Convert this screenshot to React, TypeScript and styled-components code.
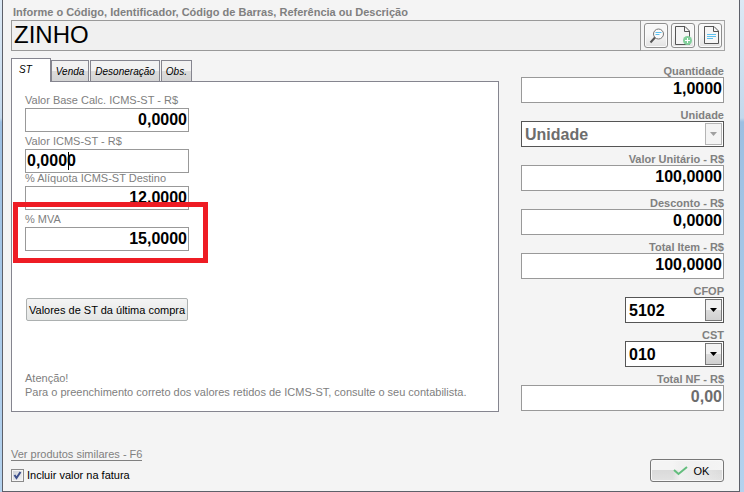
import React, { useId, useState } from "react";
import styled, { createGlobalStyle, css } from "styled-components";

const GlobalStyle = createGlobalStyle`
  *, *::before, *::after { box-sizing: border-box; }
  body {
    margin: 0;
    font-family: "Liberation Sans", Arial, sans-serif;
    font-size: 11px;
    color: #808080;
  }
  input, select, button { font-family: inherit; margin: 0; }
`;

const Frame = styled.div`
  min-height: 100vh;
  padding: 0 4px 0 2px;
  background: linear-gradient(#dce9f5 0, #c3d8ec 118px, #9cbfe2 122px, #b4d2ee 100%);
`;

const Window = styled.main`
  min-height: 100vh;
  display: flex;
  flex-direction: column;
  padding: 5px 14px 9px 8px;
  background: #f4f4f4;
  border: solid #5d6069;
  border-width: 0 1px 1px;
`;

const SearchLabel = styled.label`
  padding-left: 2px;
  font-weight: bold;
  line-height: 15px;
`;

const SearchRow = styled.div`
  display: flex;
  height: 31px;
`;

const SearchInput = styled.input`
  flex: 1;
  min-width: 0;
  padding: 0 2px 2px;
  border: 1px solid #999;
  border-radius: 0;
  background: #f0f0f0;
  color: #000;
  font-size: 24px;
  outline: none;
`;

const Tools = styled.div`
  display: flex;
  gap: 3px;
  padding: 2px 2px 2px 3px;
  border: solid #a5a5a5;
  border-width: 1px 1px 1px 0;
`;

const ToolButton = styled.button`
  display: flex;
  align-items: center;
  justify-content: center;
  width: 24px;
  height: 25px;
  padding: 0;
  border: 1px solid #8e8e8e;
  border-radius: 3px;
  background: linear-gradient(#f7f7f7 45%, #e2e2e2);
  box-shadow: inset 0 0 0 1px #fbfbfb;
`;

const Columns = styled.div`
  display: flex;
  align-items: flex-start;
  gap: 22px;
  padding: 7px 1px 0 0;
`;

const TabArea = styled.section`
  flex: 1;
  min-width: 0;
`;

const TabList = styled.div`
  display: flex;
  align-items: flex-end;
`;

const Tab = styled.button<{ $active?: boolean }>`
  height: 21px;
  margin-right: 1px;
  padding: 0 4px;
  border: 1px solid #85858f;
  border-bottom: 0;
  background: linear-gradient(#f2f2f2 50%, #dcdcdc 50%, #d4d4d4);
  color: #000;
  font-size: 10px;
  font-style: italic;
  white-space: nowrap;
  ${(p) =>
    p.$active &&
    css`
      height: 24px;
      margin: 0 0 -1px;
      padding: 0 18px 2px 7px;
      background: #fff;
      position: relative;
    `}
`;

const Panel = styled.div`
  display: flex;
  flex-direction: column;
  align-items: flex-start;
  padding: 13px 13px 12px;
  border: 1px solid #85858f;
  background: #fff;
`;

const TaxFields = styled.div`
  width: 164px;
`;

const Field = styled.div<{ $gap: number }>`
  position: relative;
  display: flex;
  flex-direction: column;
  padding-bottom: ${(p) => p.$gap}px;
`;

const FieldLabel = styled.label<{ $strong?: boolean }>`
  line-height: ${(p) => (p.$strong ? 12 : 13)}px;
  padding-bottom: ${(p) => (p.$strong ? 0 : 1)}px;
  margin-top: ${(p) => (p.$strong ? 0 : -1)}px;
  white-space: nowrap;
  ${(p) => p.$strong && "font-weight: bold; text-align: right;"}
`;

const NumberInput = styled.input<{ $left?: boolean; $tall?: boolean }>`
  width: 100%;
  height: ${(p) => (p.$tall ? 26 : 24)}px;
  padding: 0 1px ${(p) => (p.$tall ? 3 : 1)}px;
  border: 1px solid #999;
  border-radius: 0;
  background: #fff;
  color: #000;
  font-size: 16px;
  font-weight: bold;
  text-align: ${(p) => (p.$left ? "left" : "right")};
  outline: none;
  &:disabled { color: #6d6d6d; }
`;

const Caret = styled.span`
  position: absolute;
  left: 43px;
  bottom: 3px;
  width: 1px;
  height: 18px;
  background: #000;
`;

const Highlight = styled.span`
  position: absolute;
  inset: -12px -19px -12px -12px;
  border: 5px solid #ee1c24;
  pointer-events: none;
`;

const LastValuesButton = styled.button`
  height: 23px;
  margin: 47px 0 0 1px;
  padding: 0 2px;
  border: 1px solid #acb0b0;
  border-radius: 2px;
  background: linear-gradient(#f4f4f4, #e4e6e5);
  color: #000;
  font-size: 11px;
  white-space: nowrap;
`;

const Notice = styled.p`
  margin: 50px 0 0;
  line-height: 14px;
`;

const Totals = styled.section`
  width: 203px;
  padding-top: 7px;
`;

const SelectBox = styled.span<{ $short?: boolean }>`
  position: relative;
  align-self: flex-end;
  display: flex;
  width: ${(p) => (p.$short ? "99px" : "100%")};
`;

const Select = styled.select`
  appearance: none;
  width: 100%;
  height: 26px;
  padding: 0 22px 0 3px;
  border: 1px solid #555;
  border-radius: 0;
  background: #fff;
  color: #000;
  font-size: 16px;
  font-weight: bold;
  outline: none;
  &:disabled { color: #6d6d6d; opacity: 1; }
`;

const Arrow = styled.span<{ $muted?: boolean }>`
  position: absolute;
  top: 2px;
  right: 2px;
  bottom: 2px;
  width: 17px;
  display: flex;
  align-items: center;
  justify-content: center;
  border: 1px solid ${(p) => (p.$muted ? "#b5b5b5" : "#777")};
  background: ${(p) => (p.$muted ? "#f4f4f4" : "linear-gradient(#f2f2f2 50%, #dcdcdc 50%, #d0d0d0)")};
  color: ${(p) => (p.$muted ? "#a0a0a0" : "#000")};
  pointer-events: none;
`;

const Footer = styled.footer`
  display: flex;
  align-items: flex-end;
  justify-content: space-between;
  margin-top: auto;
  padding-top: 20px;
`;

const FooterLeft = styled.div`
  display: flex;
  flex-direction: column;
  align-items: flex-start;
  gap: 7px;
`;

const SimilarLink = styled.a`
  border-bottom: 1px solid #808080;
  color: #808080;
  font-size: 11px;
  line-height: 12px;
  text-decoration: none;
`;

const CheckLabel = styled.label`
  display: flex;
  align-items: center;
  gap: 3px;
  color: #000;
  line-height: 14px;
`;

const CheckBox = styled.span`
  position: relative;
  display: flex;
  width: 13px;
  height: 13px;
  svg { position: absolute; inset: 0; pointer-events: none; }
  input:not(:checked) + svg { display: none; }
`;

const CheckInput = styled.input`
  appearance: none;
  width: 13px;
  height: 13px;
  border: 1px solid #8a8a8a;
  background: linear-gradient(135deg, #ccd0d6, #f4f4f4);
  box-shadow: inset 0 0 0 1px #f6f6f6;
`;

const OkButton = styled.button`
  display: flex;
  align-items: center;
  justify-content: center;
  gap: 6px;
  width: 74px;
  height: 23px;
  margin-right: 1px;
  padding: 0 0 0 8px;
  border: 1px solid #777;
  border-radius: 3px;
  background:
    linear-gradient(90deg, transparent 30%, #f0f0f0 40%, transparent 100%),
    linear-gradient(#f4f4f4 50%, #dadada 50%, #e2e2e2);
  box-shadow: inset 0 0 0 1px #f8f8f8;
  color: #000;
  font-size: 11px;
`;

function SearchIcon() {
  return (
    <svg width="20" height="21" viewBox="0 0 20 21" fill="none" aria-hidden="true">
      <circle cx="12.5" cy="9" r="5" fill="#fafafa" stroke="#777" />
      <path d="M9 12.5 4.5 17.500" stroke="#555" strokeWidth="2" />
      <path d="M9.500 7.500h6M9.500 9.500h4" stroke="#5cc0ee" />
    </svg>
  );
}

function AddPageIcon() {
  return (
    <svg width="20" height="21" viewBox="0 0 20 21" fill="none" aria-hidden="true">
      <path d="M2.500 1.500h9.500l4.500 4.500v13.500h-14z" fill="#f5f5f5" stroke="#555" />
      <path d="M11.500 1.500v5h5" stroke="#555" />
      <circle cx="14.500" cy="15.500" r="4.500" fill="#83cf9b" />
      <path d="M14.500 13v5M12 15.500h5" stroke="#fff" />
    </svg>
  );
}

function PageIcon() {
  return (
    <svg width="20" height="21" viewBox="0 0 20 21" fill="none" aria-hidden="true">
      <path d="M4.500 1.500h9.500l4.500 4.500v12.500h-14z" fill="#f5f5f5" stroke="#555" />
      <path d="M13.500 1.500v5h5" stroke="#555" />
      <path d="M7 9.500h9M7 11.500h9M7 13.500h6" stroke="#5cc0ee" />
    </svg>
  );
}

type NumberFieldProps = {
  label: string;
  initial: string;
  gap: number;
  strong?: boolean;
  left?: boolean;
  disabled?: boolean;
  children?: React.ReactNode;
};

function NumberField({ label, initial, gap, strong, left, disabled, children }: NumberFieldProps) {
  const id = useId();
  const [value, setValue] = useState(initial);
  return (
    <Field $gap={gap}>
      <FieldLabel htmlFor={id} $strong={strong}>{label}</FieldLabel>
      <NumberInput
        id={id}
        $left={left}
        $tall={strong}
        disabled={disabled}
        value={value}
        onChange={(e) => setValue(e.target.value)}
      />
      {children}
    </Field>
  );
}

function SelectField({ label, value, short, disabled }: { label: string; value: string; short?: boolean; disabled?: boolean }) {
  const id = useId();
  return (
    <Field $gap={6}>
      <FieldLabel htmlFor={id} $strong>{label}</FieldLabel>
      <SelectBox $short={short}>
        <Select id={id} defaultValue={value} disabled={disabled}>
          <option>{value}</option>
        </Select>
        <Arrow $muted={disabled}>
          <svg width="7" height="4" viewBox="0 0 7 4" aria-hidden="true">
            <path d="M0 0h7L3.500 4z" fill="currentColor" />
          </svg>
        </Arrow>
      </SelectBox>
    </Field>
  );
}

export default function App() {
  return (
    <>
      <GlobalStyle />
      <Frame>
        <Window>
          <SearchLabel htmlFor="search">
            Informe o Código, Identificador, Código de Barras, Referência ou Descrição
          </SearchLabel>
          <SearchRow>
            <SearchInput id="search" defaultValue="ZINHO" />
            <Tools>
              <ToolButton aria-label="Pesquisar"><SearchIcon /></ToolButton>
              <ToolButton aria-label="Novo"><AddPageIcon /></ToolButton>
              <ToolButton aria-label="Detalhes"><PageIcon /></ToolButton>
            </Tools>
          </SearchRow>

          <Columns>
            <TabArea>
              <TabList role="tablist">
                <Tab role="tab" aria-selected $active>ST</Tab>
                <Tab role="tab">Venda</Tab>
                <Tab role="tab">Desoneração</Tab>
                <Tab role="tab">Obs.</Tab>
              </TabList>
              <Panel role="tabpanel">
                <TaxFields>
                  <NumberField label="Valor Base Calc. ICMS-ST - R$" initial="0,0000" gap={4} />
                  <NumberField label="Valor ICMS-ST - R$" initial="0,0000" gap={0} left>
                    <Caret />
                  </NumberField>
                  <NumberField label="% Alíquota ICMS-ST Destino" initial="12,0000" gap={4} />
                  <NumberField label="% MVA" initial="15,0000" gap={0}>
                    <Highlight />
                  </NumberField>
                </TaxFields>
                <LastValuesButton>Valores de ST da última compra</LastValuesButton>
                <Notice>
                  Atenção!
                  <br />
                  Para o preenchimento correto dos valores retidos de ICMS-ST, consulte o seu contabilista.
                </Notice>
              </Panel>
            </TabArea>

            <Totals>
              <NumberField label="Quantidade" initial="1,0000" gap={6} strong />
              <SelectField label="Unidade" value="Unidade" disabled />
              <NumberField label="Valor Unitário - R$" initial="100,0000" gap={6} strong />
              <NumberField label="Desconto - R$" initial="0,0000" gap={6} strong />
              <NumberField label="Total Item - R$" initial="100,0000" gap={6} strong />
              <SelectField label="CFOP" value="5102" short />
              <SelectField label="CST" value="010" short />
              <NumberField label="Total NF - R$" initial="0,00" gap={0} strong disabled />
            </Totals>
          </Columns>

          <Footer>
            <FooterLeft>
              <SimilarLink href="#similares">Ver produtos similares - F6</SimilarLink>
              <CheckLabel>
                <CheckBox>
                  <CheckInput type="checkbox" defaultChecked />
                  <svg width="13" height="13" viewBox="0 0 13 13" fill="none" aria-hidden="true">
                    <path d="M3.500 6 5.500 9 9.500 3" stroke="#3c4f8c" strokeWidth="2" />
                  </svg>
                </CheckBox>
                Incluir valor na fatura
              </CheckLabel>
            </FooterLeft>
            <OkButton>
              <svg width="15" height="10" viewBox="0 0 15 10" fill="none" aria-hidden="true">
                <path d="M1 4 5.500 8 14 1" stroke="#63bd7d" strokeWidth="2" />
              </svg>
              OK
            </OkButton>
          </Footer>
        </Window>
      </Frame>
    </>
  );
}
